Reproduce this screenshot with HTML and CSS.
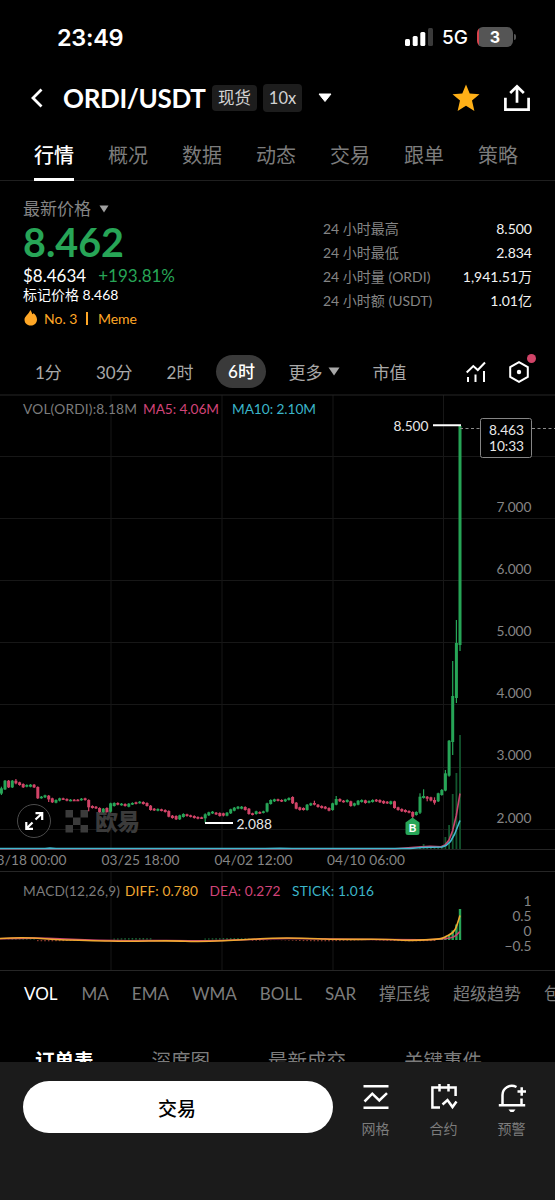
FILE: index.html
```html
<!DOCTYPE html>
<html lang="zh-CN">

<head>
    <meta charset="UTF-8">
    <meta name="viewport" content="width=device-width, initial-scale=1.0">
    <title>ORDI/USDT</title>
    <link rel="stylesheet" href="styles.css">
</head>

<body>
    <div class="screen">
        <div class="status">
            <span class="time">23:49</span>
            <svg class="signal" width="28" height="18" viewBox="0 0 28 18">
                <rect x="0" y="11" width="5" height="7" rx="1.5" fill="#fff" />
                <rect x="7.7" y="8" width="5" height="10" rx="1.5" fill="#fff" />
                <rect x="15.3" y="4" width="5" height="14" rx="1.5" fill="#fff" />
                <rect x="23" y="0" width="5" height="18" rx="1.5" fill="#3a3a3a" />
            </svg>
            <span class="net">5G</span>
            <span class="battery">3</span>
            <span class="cap"></span>
        </div>

        <div class="head">
            <svg class="back" width="14" height="22" viewBox="0 0 14 22" fill="none" stroke="#fff" stroke-width="2.8">
                <path d="M11.5 2.5 3 11l8.500 8.500" />
            </svg>
            <h1>ORDI/USDT</h1>
            <span class="tag">现货</span>
            <span class="tag big">10x</span>
            <svg class="down" width="14" height="10" viewBox="0 0 14 10">
                <path d="M1 1h12L7 8.500z" fill="#fff" stroke="#fff" stroke-linejoin="round" />
            </svg>
            <svg class="star" width="28" height="28" viewBox="0 0 28 28">
                <path d="M14 .5l3.700 9 9.800.8-7.500 6.300 2.400 10.400L14 21.700 5.600 27 8 16.600.5 10.300l9.800-.8z" fill="#ffb017" />
            </svg>
            <svg class="share" width="28" height="28" viewBox="0 0 28 28" fill="none" stroke="#fff" stroke-width="2.700">
                <path d="M2.400 13.800v11.800h23.200V13.800M14 18.800V3M7.200 9 14 2.400 20.800 9" />
            </svg>
        </div>

        <div class="tabs">
            <span class="active">行情</span>
            <span>概况</span>
            <span>数据</span>
            <span>动态</span>
            <span>交易</span>
            <span>跟单</span>
            <span>策略</span>
        </div>

        <div class="summary">
            <div class="left">
                <div class="label">最新价格
                    <svg width="10" height="8" viewBox="0 0 10 8"><path d="M.5.5h9L5 7.500z" fill="#a0a0a0" /></svg>
                </div>
                <div class="price">8.462</div>
                <div class="usd">$8.4634<span>+193.81%</span></div>
                <div class="mark">标记价格 8.468</div>
                <div class="rank">
                    <svg width="13" height="16" viewBox="0 0 13 16">
                        <path d="M6.200 0c1.200 1.400 1.700 2.500 2 4.200l1.500-1C11.500 4.800 13 7 13 9.400 13 13 10.200 15.500 6.600 15.500S.5 13 .5 9.500C.5 6.300 5 4 6.200 0z" fill="#ffa726" />
                    </svg>
                    <span>No. 3</span><i></i><span>Meme</span>
                </div>
            </div>
            <div class="stats">
                <div><span>24 小时最高</span><b>8.500</b></div>
                <div><span>24 小时最低</span><b>2.834</b></div>
                <div><span>24 小时量 (ORDI)</span><b>1,941.51万</b></div>
                <div><span>24 小时额 (USDT)</span><b>1.01亿</b></div>
            </div>
        </div>

        <div class="periods">
            <span>1分</span>
            <span class="p30">30分</span>
            <span class="p2">2时</span>
            <span class="active">6时</span>
            <span class="more">更多
                <svg width="12" height="9" viewBox="0 0 12 9"><path d="M.5.5h11L6 8.500z" fill="#a8a8a8" /></svg>
            </span>
            <span class="cap-value">市值</span>
            <svg class="ind" width="20" height="22" viewBox="0 0 20 22" fill="none" stroke="#fff" stroke-width="2">
                <path d="M.7 11.500 7.300 5l4.500 4L19 1.500M2 16v5M9.500 13.500V21M18 10v11" />
            </svg>
            <span class="setting">
                <svg width="20" height="22" viewBox="0 0 20 22" fill="none" stroke="#fff" stroke-width="2">
                    <path d="M10 1.200 18.800 6v10L10 20.800 1.200 16V6z" />
                    <circle cx="10" cy="11" r="2.200" fill="#fff" stroke="none" />
                </svg>
                <i class="dot"></i>
            </span>
        </div>

        <svg class="chart" width="555" height="577" viewBox="0 394 555 577">
            <path class="grid" d="M0 456.500h555M0 518.500h555M0 580.500h555M0 642.500h555M0 704.500h555M0 767.500h555M0 829.500h555" />
            <path class="grid" d="M111 395v454M222 395v454M333 395v454M443.500 395v454M111 872v98M222 872v98M333 872v98M443.500 872v98" />
            <path class="line" d="M0 395h555M0 849.500h555M0 871.500h555M0 970.500h555" />

            <!-- watermark -->
            <g fill="#3b3b3b">
                <path d="M65.500 810h7.500v7.500h-7.500zM80.500 810H88v7.500h-7.500zM73 817.500h7.500v7.500H73zM65.500 825h7.500v7.500h-7.500zM80.500 825H88v7.500h-7.500z" />
                <text class="brand" x="95" y="830" textLength="45">欧易</text>
            </g>

            <g id="volume"></g>
            <g id="candles"></g>
            <path class="ma5" d="M0 848.800H395L418 847l12-.8 11 .6 4-1.800 4-5 3.700-9.500 3.600-15 3.700-22" />
            <path class="ma10" d="M0 848.500H45l5-.4 6 .4H265l15-.3 12 .3H410l12-1 20-.5 4-1.500 4.500-4 4-7L460 820.500" />

            <path d="M460 428.500h20M532 428.500h23" stroke="#8c8c8c" stroke-dasharray="3 2.500" />
            <path d="M433 425.200h28M205 823h28" stroke="#fff" stroke-width="2" />
            <text class="bright" x="393.500" y="430.500" textLength="35">8.500</text>
            <text class="bright" x="236.500" y="828.500" textLength="35.500">2.088</text>

            <rect x="480.500" y="418.500" width="51" height="39" rx="2" fill="#000" stroke="#858585" />
            <text class="bright" x="489" y="434.500" textLength="35">8.463</text>
            <text class="bright" x="489" y="451" textLength="35">10:33</text>

            <g class="scale">
                <text x="531.500" y="512">7.000</text>
                <text x="531.500" y="574">6.000</text>
                <text x="531.500" y="636">5.000</text>
                <text x="531.500" y="698">4.000</text>
                <text x="531.500" y="760">3.000</text>
                <text x="531.500" y="822.500">2.000</text>
                <text x="531.500" y="906">1</text>
                <text x="531.500" y="921">0.5</text>
                <text x="531.500" y="936">0</text>
                <text x="531.500" y="951">−0.5</text>
            </g>

            <g class="axis">
                <text x="-11.500" y="865" textLength="78">03/18 00:00</text>
                <text x="101.500" y="865" textLength="78">03/25 18:00</text>
                <text x="214.500" y="865" textLength="78">04/02 12:00</text>
                <text x="327" y="865" textLength="78">04/10 06:00</text>
            </g>

            <path d="M412.500 817.500 419.500 822.500V832.500a2.500 2.500 0 0 1-2.500 2.500h-9a2.500 2.500 0 0 1-2.500-2.500V822.500z" fill="#27a557" />
            <text class="buy" x="412.500" y="832">B</text>

            <circle cx="34" cy="821" r="16.500" fill="#000" fill-opacity=".6" stroke="#4b4b4b" />
            <path d="M26.500 828.500 32.500 822.500M35.500 819.500 42 813.500M35.500 813.200h6.700v6.700M33 828.800h-6.700v-6.700" fill="none" stroke="#fff" stroke-width="2.200" />

            <g class="legend">
                <text class="c-gray" x="23" y="414" textLength="114">VOL(ORDI):8.18M</text>
                <text class="c-pink" x="143" y="414" textLength="76">MA5: 4.06M</text>
                <text class="c-cyan" x="232" y="414" textLength="84">MA10: 2.10M</text>
                <text class="c-gray" x="23" y="896" textLength="97">MACD(12,26,9)</text>
                <text class="c-orange" x="125" y="896" textLength="73">DIFF: 0.780</text>
                <text class="c-pink" x="209.500" y="896" textLength="71">DEA: 0.272</text>
                <text class="c-cyan" x="292" y="896" textLength="82">STICK: 1.016</text>
            </g>

            <g id="macd"></g>
            <path class="dea" d="M0 938.800C20 938 40 937.600 60 938.800S95 940.300 115 940.600 160 940.300 190 940.700 245 939.500 270 938.700 320 939 350 939.200 400 939.800 420 939.800 438 939 446 938.500 455 936.500 460 931.500" />
            <path class="diff" d="M0 938.500C15 937.500 30 937.300 45 938.800S80 940.200 110 941 160 940.200 185 941.200 235 940.500 260 938.800 300 938 325 939 380 938.600 395 939.800 415 940.700 430 939.600 441 938.600 448 935.500 456 929 460 915.500" />
        </svg>

        <div class="indicators">
            <span class="active">VOL</span>
            <span>MA</span>
            <span>EMA</span>
            <span>WMA</span>
            <span>BOLL</span>
            <span>SAR</span>
            <span>撑压线</span>
            <span>超级趋势</span>
            <span>包络线</span>
        </div>

        <div class="orders">
            <span class="active">订单表</span>
            <span>深度图</span>
            <span>最新成交</span>
            <span>关键事件</span>
        </div>
    </div>

    <div class="footer">
        <button>交易</button>
        <div class="action">
            <svg width="28" height="28" viewBox="0 0 28 28">
                <path d="M1.500 2.200h25M1.500 23.800h25M2.500 17.500l7.800-7.800 7 6.800 7.700-7.300" />
            </svg>
            <span>网格</span>
        </div>
        <div class="action">
            <svg width="28" height="28" viewBox="0 0 28 28">
                <path d="M10 23.500H2.400V3.600h23.200V12M9.500 0v7.500M18.500 0v7.500M12.500 20.500l5-4.500 5 7 4-5.500" />
            </svg>
            <span>合约</span>
        </div>
        <div class="action">
            <svg width="28" height="28" viewBox="0 0 28 28">
                <path d="M18.500 3C11.500-.5 4.500 4.500 4.500 11v9.500M.8 21.200h26.400M23.500 14.500v6M19.500 7.500h8.500M23.700 3.300v8.500" />
                <path class="solid" d="M10.500 25.500h7l-2 2.500h-3z" />
            </svg>
            <span>预警</span>
        </div>
    </div>

    <script>

        // body top, body bottom, up / down, wick top, wick bottom (unit is a third of a pixel, from y = 760)
        var data = [
            [85, 101, 1, 80, 105], [62, 88, 1], [62, 82, 0], [62, 82, 1], [62, 70, 0, 57, 73], [67, 75, 0], [72, 82, 0], [75, 80, 1], [74, 80, 1], [74, 82, 0],
            [81, 115, 0], [110, 114, 1], [106, 112, 1], [107, 118, 0, 105, 126], [115, 127, 0], [120, 128, 1], [115, 122, 1], [115, 118, 0], [117, 122, 0], [119, 122, 1],
            [119, 121, 0], [119, 121, 0], [116, 120, 1], [115, 120, 0], [120, 142, 0, 118, 154], [138, 144, 0], [140, 145, 0], [144, 156, 0], [146, 156, 1], [144, 156, 0],
            [130, 155, 1], [129, 138, 1], [129, 134, 0], [131, 135, 1], [132, 138, 0], [131, 140, 1], [129, 133, 1], [127, 131, 0], [125, 129, 1], [126, 132, 0],
            [129, 138, 0], [137, 150, 0], [146, 151, 0], [147, 152, 1], [148, 152, 0], [150, 156, 0], [153, 170, 0], [167, 174, 0], [168, 178, 0], [166, 178, 1],
            [162, 171, 1], [163, 168, 0], [166, 170, 0], [168, 174, 0], [171, 176, 0], [172, 175, 0], [163, 175, 1, 160, 188], [157, 166, 1], [155, 160, 1], [158, 163, 0],
            [159, 168, 0], [160, 167, 0], [158, 167, 1], [148, 160, 1], [143, 152, 1], [140, 146, 1], [140, 146, 1], [141, 150, 0], [146, 162, 0], [160, 164, 0],
            [154, 162, 1], [156, 160, 0], [154, 158, 1], [130, 155, 1], [120, 132, 1], [118, 124, 1], [118, 122, 0], [120, 124, 0], [118, 124, 1], [114, 120, 1],
            [111, 130, 0], [128, 146, 0], [142, 150, 0], [144, 150, 0], [134, 150, 1], [130, 136, 1], [129, 134, 0, 122, 136], [134, 141, 0], [138, 144, 0], [140, 146, 0],
            [144, 152, 0], [130, 150, 1], [117, 134, 1, 108, 136], [117, 124, 0], [122, 126, 0], [120, 126, 1], [124, 138, 0], [130, 137, 1], [122, 134, 1], [120, 126, 1],
            [121, 129, 0], [123, 128, 1], [120, 126, 1], [119, 124, 0], [120, 127, 0], [123, 130, 0], [125, 130, 0], [124, 132, 1], [124, 144, 0], [142, 150, 0],
            [147, 154, 0], [150, 156, 0], [153, 158, 0], [156, 170, 0, 154, 175], [156, 165, 1], [110, 158, 1, 100, 162], [108, 114, 1, 88, 116], [110, 116, 0, 108, 124], [112, 122, 0], [120, 128, 0, 112, 134],
            [100, 124, 1], [90, 105, 1, 87, 107], [40, 92, 1, 30, 94], [-58, 47, 1, -60, 50], [-192, -54, 1, -297, -15], [-351, -186, 1, -420, -171], [-1002, -345, 1, -1005, -327]
        ];
        var up = '#27a557';
        var down = '#d14468';

        function rect(x, y, w, h, color) {
            return `<rect x="${x.toFixed(1)}" y="${y.toFixed(1)}" width="${w}" height="${h.toFixed(1)}" fill="${color}"/>`;
        }

        function xpos(i) {
            return 460 - (126 - i) * 3.64;
        }

        var candles = '';
        data.forEach((a, i) => {
            var color = a[2] ? up : down;
            var top = 760 + a[0] / 3;
            candles += rect(xpos(i) - 1.5, top, 3, Math.max(1.6, (a[1] - a[0]) / 3), color);
            var w1 = a.length > 3 ? a[3] : a[0] - 2;
            var w2 = a.length > 3 ? a[4] : a[1] + 2;
            candles += rect(xpos(i) - 0.6, 760 + w1 / 3, 1.2, (w2 - w1) / 3, color);
        });
        document.querySelector('#candles').innerHTML = candles;

        // volume of the last candles
        var volume = '';
        [3, 5, 3, 2, 3, 2, 3, 12, 24, 55, 76, 114].forEach((v, i) => {
            volume += rect(xpos(115 + i) - 0.9, 849 - v, 1.8, v, '#13562e');
        });
        document.querySelector('#volume').innerHTML = volume;

        var macd = '';
        for (var i = 0; i < 120; i++) {
            var green = i < 10 || (i > 30 && i < 42) || (i > 55 && i < 69);
            var h = Math.abs(Math.sin(i / 8)) * 1.3;
            macd += rect(xpos(i) - 0.8, green ? 939.5 - h : 940, 1.6, h, green ? '#1c7a40' : '#8a3a2c');
        }
        [1, 2, 3, 5, 9.5, 15.5, 31].forEach((v, i) => {
            macd += rect(xpos(120 + i) - 1.2, 940 - v, 2.4, v, up);
        });
        document.querySelector('#macd').innerHTML = macd;

    </script>
</body>

</html>
```
FILE: styles.css
```css
* {
    margin: 0;
    padding: 0;
    box-sizing: border-box;
}

body {
    width: 555px;
    height: 1200px;
    overflow: hidden;
    background-color: #000;
    color: #fff;
    font-family: Lato, "Noto Sans CJK SC", sans-serif;
}

svg {
    display: block;
    flex-shrink: 0;
}

span {
    white-space: nowrap;
}

.screen {
    height: 1062px;
    overflow: hidden;
}

/* status bar */
.status {
    display: flex;
    align-items: center;
    height: 74px;
    padding-left: 57px;
    font-family: Inter, sans-serif;
}

.time {
    width: 348px;
    font-size: 23.5px;
    font-weight: 600;
    letter-spacing: -0.3px;
}

.net {
    width: 35px;
    margin-left: 9px;
    font-size: 19px;
    font-weight: 500;
}

.battery {
    width: 36px;
    height: 20px;
    border-radius: 6px;
    background: linear-gradient(to right, #d9434c 2px, #555 2px);
    font-size: 16px;
    font-weight: 700;
    line-height: 20px;
    text-align: center;
}

.cap {
    width: 2px;
    height: 6px;
    margin-left: 1px;
    border-radius: 0 2px 2px 0;
    background-color: #555;
}

/* pair header */
.head {
    display: flex;
    align-items: center;
    height: 48px;
    padding-left: 30px;
}

h1 {
    width: 149px;
    margin-left: 19px;
    font-size: 26px;
    font-weight: 700;
    letter-spacing: -0.35px;
}

.tag {
    width: 45px;
    height: 26px;
    margin-right: 6px;
    border-radius: 4px;
    background-color: #1d1d1d;
    color: #d2d2d2;
    font-size: 16.5px;
    line-height: 26px;
    text-align: center;
}

.tag.big {
    width: 39px;
    height: 28px;
    margin-right: 0;
    line-height: 28px;
}

.down {
    margin-left: 16px;
}

.star {
    margin-left: 120px;
}

.share {
    margin-left: 23px;
}

/* page tabs */
.tabs {
    display: flex;
    gap: 34px;
    height: 59px;
    padding: 12px 34px 0;
    border-bottom: 1px solid #1f1f1f;
    color: #7c7c7c;
    font-size: 20px;
    line-height: 42px;
}

.tabs span {
    height: 47px;
}

.tabs .active {
    border-bottom: 3px solid #fff;
    color: #fff;
    font-weight: 500;
}

/* price and stats */
.summary {
    display: flex;
    height: 164px;
    padding: 17px 23px 0;
}

.left {
    width: 300px;
}

.label {
    display: flex;
    align-items: center;
    gap: 8px;
    color: #858585;
    font-size: 17px;
    line-height: 22px;
}

.price {
    margin-top: 1px;
    color: #27a557;
    font-size: 39.5px;
    font-weight: 700;
    line-height: 42px;
}

.usd {
    margin-top: 3px;
    font-size: 17px;
    line-height: 20px;
}

.usd span {
    margin-left: 12px;
    color: #27a557;
}

.mark {
    font-size: 14px;
    line-height: 18px;
}

.rank {
    display: flex;
    align-items: center;
    height: 20px;
    margin-top: 4px;
    color: #ffa726;
    font-size: 14px;
}

.rank svg {
    margin: 0 7px 0 1px;
}

.rank i {
    width: 1.5px;
    height: 13px;
    margin: 0 10px 0 9px;
    background-color: #ffa726;
}

.stats {
    flex: 1;
    padding-top: 19px;
    color: #858585;
    font-size: 14px;
    line-height: 24px;
}

.stats div {
    display: flex;
    justify-content: space-between;
}

.stats b {
    color: #f2f2f2;
    font-weight: 400;
}

/* time periods */
.periods {
    display: flex;
    align-items: center;
    height: 49px;
    padding-left: 35px;
    padding-top: 4px;
    color: #a8a8a8;
    font-size: 17px;
}

.p30,
.p2 {
    margin-left: 34px;
}

.periods .active {
    width: 50px;
    height: 33px;
    margin-left: 23px;
    border-radius: 17px;
    background-color: #3a3a3a;
    color: #fff;
    font-weight: 500;
    line-height: 33px;
    text-align: center;
}

.more {
    display: flex;
    align-items: center;
    gap: 6px;
    margin-left: 22px;
}

.cap-value {
    margin-left: 32px;
}

.ind {
    margin-left: 60px;
}

.setting {
    position: relative;
    margin-left: 23px;
}

.dot {
    position: absolute;
    top: -7px;
    left: 18px;
    width: 9px;
    height: 9px;
    border-radius: 50%;
    background-color: #d14468;
}

/* chart */
.chart text {
    font-size: 13.7px;
}

.grid {
    stroke: #171717;
}

.line {
    stroke: #262626;
}

.ma5,
.ma10,
.dea,
.diff {
    fill: none;
    stroke-width: 1.6;
}

.ma5,
.dea {
    stroke: #c9456f;
}

.ma10 {
    stroke: #43b8cf;
}

.diff {
    stroke: #f0a832;
}

.chart .brand {
    font-size: 23px;
    font-weight: 900;
}

.bright {
    fill: #e8e8e8;
}

.scale {
    fill: #858585;
    text-anchor: end;
}

.axis {
    fill: #858585;
}

.chart .buy {
    fill: #fff;
    font-size: 12px;
    font-weight: 700;
    text-anchor: middle;
}

.c-gray {
    fill: #7c7c7c;
}

.c-pink {
    fill: #d14478;
}

.c-cyan {
    fill: #3bb5c9;
}

.c-orange {
    fill: #f0a832;
}

/* indicator names */
.indicators {
    display: flex;
    gap: 23px;
    height: 47px;
    padding-left: 24px;
    color: #7c7c7c;
    font-size: 17px;
    line-height: 46px;
}

.indicators .active {
    margin-right: 1px;
    color: #fff;
}

.orders {
    display: flex;
    gap: 58px;
    padding: 23px 0 0 35px;
    color: #7c7c7c;
    font-size: 19.5px;
    line-height: 40px;
}

.orders .active {
    color: #fff;
    font-weight: 700;
}

/* bottom bar */
.footer {
    display: flex;
    height: 138px;
    padding: 19px 0 0 23px;
    background-color: #1b1b1b;
}

button {
    width: 310px;
    height: 52px;
    margin-right: 8.5px;
    padding-right: 2px;
    border: none;
    border-radius: 26px;
    background-color: #fff;
    color: #000;
    font-family: inherit;
    font-size: 19px;
    font-weight: 500;
}

.action {
    width: 68px;
    padding-top: 3px;
    color: #7c7c7c;
    font-size: 14px;
    line-height: 20px;
    text-align: center;
}

.action svg {
    margin: 0 auto 7px;
    fill: none;
    stroke: #fff;
    stroke-width: 2.5;
}

.action .solid {
    fill: #fff;
    stroke: none;
}
```
